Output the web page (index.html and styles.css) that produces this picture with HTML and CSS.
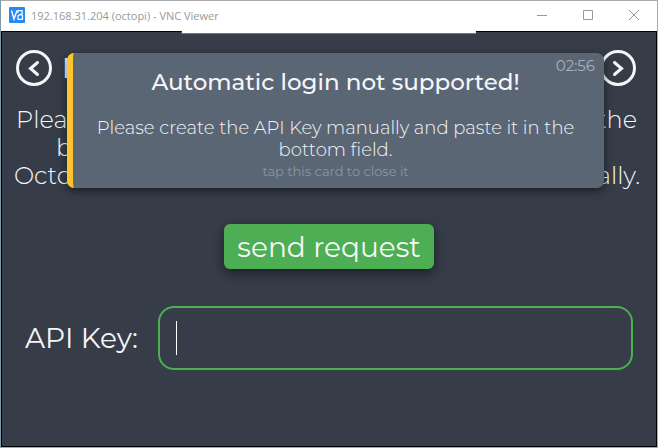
FILE: index.html
```html
<!DOCTYPE html>
<html lang="en">
  <head>
    <meta charset="utf-8">
    <title>192.168.31.204 (octopi) - VNC Viewer</title>
    <link rel="stylesheet" href="styles.css">
  </head>
  <body>
    <div class="window">
      <header class="title-bar">
        <svg class="logo" viewBox="0 0 16 16" aria-hidden="true">
          <rect width="16" height="16" rx="1" fill="#2489f5"/>
          <path d="M2.5 3.5L5 12L8 3.5" fill="none" stroke="#fff" stroke-width="1.4"/>
          <path d="M8.8 6V3.7H13.2V6.5L9 8.500V12.300H13.500V8H10.500" fill="none" stroke="#fff" stroke-width="1.2" stroke-linejoin="round"/>
        </svg>
        <h1 class="window-name">192.168.31.204 (octopi) - VNC Viewer</h1>
        <div class="window-buttons">
          <button class="window-button" type="button" aria-label="Minimize">
            <svg viewBox="0 0 10 10"><path d="M0 5.5H10"/></svg>
          </button>
          <button class="window-button" type="button" aria-label="Maximize">
            <svg viewBox="0 0 10 10"><path d="M.5 .5H9.5V9.5H.5Z"/></svg>
          </button>
          <button class="window-button" type="button" aria-label="Close">
            <svg viewBox="0 0 10 10"><path d="M0 0L10 10M10 0L0 10"/></svg>
          </button>
        </div>
      </header>

      <main class="screen">
        <div class="toolbar-tab"></div>

        <nav class="wizard-nav">
          <button class="round-button" type="button" aria-label="Back">
            <svg viewBox="0 0 36 36"><circle cx="18" cy="18" r="16.5"/><path d="M21.5 12.5L14.5 18.5L21.5 24.5"/></svg>
          </button>
          <h2 class="wizard-title">L</h2>
          <button class="round-button" type="button" aria-label="Next">
            <svg viewBox="0 0 36 36"><circle cx="18" cy="18" r="16.5"/><path d="M14.5 12.5L21.5 18.5L14.5 24.5"/></svg>
          </button>
        </nav>

        <div class="description">
          <p class="line"><span>Plea</span><span>the</span></p>
          <p class="line line-indent"><span>b</span></p>
          <p class="line line-wide"><span>Octo</span><span>ally.</span></p>
        </div>

        <button class="send" type="button">send request</button>

        <div class="key-row">
          <label class="key-label" for="api-key">API Key:</label>
          <div class="key-field">
            <input class="key-input" id="api-key" type="text">
            <span class="caret"></span>
          </div>
        </div>

        <section class="card">
          <time class="card-time">02:56</time>
          <h2 class="card-title">Automatic login not supported!</h2>
          <p class="card-text">Please create the API Key manually and paste it in the bottom field.</p>
          <p class="card-hint">tap this card to close it</p>
        </section>
      </main>
    </div>
  </body>
</html>
```
FILE: styles.css
```css
* {
  box-sizing: border-box;
  margin: 0;
  padding: 0;
}

body {
  background: #fff;
  font-family: Montserrat, Inter, "Open Sans", sans-serif;
  font-weight: 400;
  color: #f5f6fa;
}

button,
input {
  border: 0;
  background: none;
  color: inherit;
  font: inherit;
}

.window {
  display: flex;
  flex-direction: column;
  min-height: 100vh;
  border: 1px solid #a9a9a9;
  border-left-color: #7f9aaa;
}

.title-bar {
  display: flex;
  align-items: center;
  height: 30px;
  padding: 0 0 2px 8px;
  background: #fff;
}

.logo {
  width: 16px;
  height: 16px;
}

.window-name {
  flex: 1;
  margin-left: 6px;
  color: #999;
  font: 400 11px "Open Sans", "Noto Sans", sans-serif;
}

.window-buttons {
  display: flex;
}

.window-button {
  display: flex;
  align-items: center;
  justify-content: center;
  width: 46px;
  height: 28px;
}

.window-button svg {
  width: 10px;
  height: 10px;
  fill: none;
  stroke: #999;
}

.screen {
  position: relative;
  flex: 1;
  border: 1px solid #000;
  background: #363d48;
}

.toolbar-tab {
  position: absolute;
  top: -1px;
  left: 50%;
  width: 45%;
  height: 3px;
  border-bottom: 1px solid #777;
  background: #fff;
  transform: translateX(-50%);
}

.wizard-nav {
  display: flex;
  align-items: center;
  height: 36px;
  margin: 18px 20px 0 14px;
}

.round-button {
  width: 36px;
  height: 36px;
}

.round-button svg {
  display: block;
  fill: none;
  stroke: #f5f6fa;
  stroke-width: 3;
  stroke-linecap: round;
}

.wizard-title {
  flex: 1;
  margin-left: 10px;
  font-size: 28px;
  font-weight: 500;
}

.description {
  margin: 20px 16px 0 12px;
  font-size: 24px;
  font-weight: 300;
  line-height: 28px;
}

.line {
  display: flex;
  justify-content: space-between;
  padding: 0 3px 0 2px;
}

.line-indent {
  padding-left: 42px;
}

.line-wide {
  padding: 0;
}

.send {
  display: block;
  width: 210px;
  height: 45px;
  margin: 34px auto 0;
  border-radius: 6px;
  background: #4eae53;
  box-shadow: 0 4px 12px rgba(0, 0, 0, .5);
  font-size: 28px;
  line-height: 40px;
}

.key-row {
  display: flex;
  align-items: center;
  gap: 20px;
  margin: 37px 23px 0;
}

.key-label {
  font-size: 28px;
}

.key-field {
  position: relative;
  flex: 1;
}

.key-input {
  display: block;
  width: 100%;
  height: 64px;
  padding: 0 16px;
  border: 2px solid #4caf50;
  border-radius: 16px;
  outline: none;
  font-size: 28px;
}

.caret {
  position: absolute;
  top: 15px;
  left: 18px;
  width: 1px;
  height: 34px;
  background: #fff;
}

.card {
  position: absolute;
  top: 21px;
  left: 65px;
  right: 52px;
  height: 135px;
  padding: 15px 24px 0 18px;
  border-left: 6px solid #fec530;
  border-radius: 7px;
  background: #5b6675;
  box-shadow: 0 3px 8px rgba(0, 0, 0, .5);
  text-align: center;
}

.card-time {
  position: absolute;
  top: 3px;
  right: 9px;
  color: #a9b1bb;
  font-size: 15px;
  line-height: 20px;
}

.card-title {
  font-size: 23px;
  font-weight: 500;
  line-height: 28px;
}

.card-text {
  margin-top: 21px;
  font-size: 18px;
  font-weight: 300;
  line-height: 22px;
}

.card-hint {
  color: #8c95a0;
  font-size: 13px;
  line-height: 20px;
}
```
